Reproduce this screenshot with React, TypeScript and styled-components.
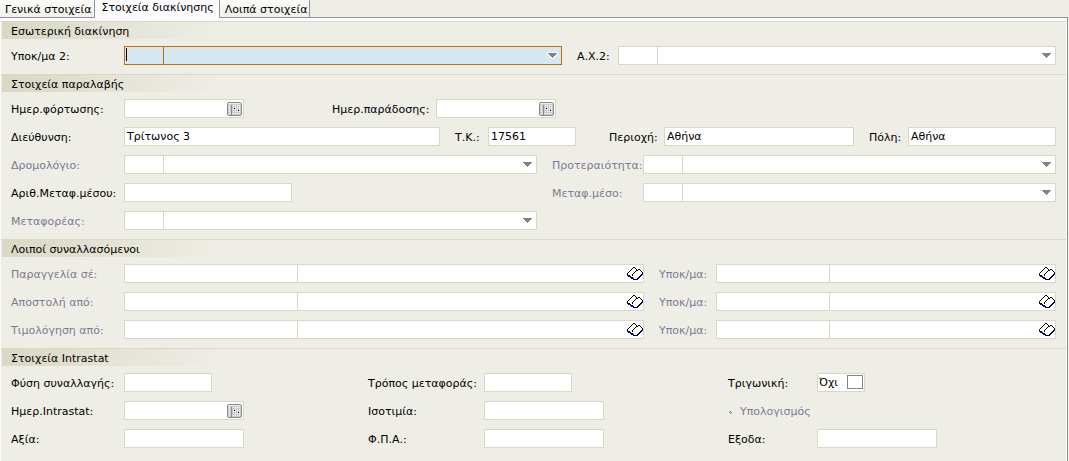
import React, { useId, useState } from "react";
import styled, { createGlobalStyle, css } from "styled-components";

const color = {
  page: "#efeee6",
  line: "#d8d8c4",
  frame: "#8f9398",
  muted: "#7c7995",
  focus: "#c8690c",
  focusFill: "#d7e8f0",
};

const GlobalStyle = createGlobalStyle`
  * { box-sizing: border-box; }
  body { margin: 0; background: ${color.page}; }
  body, input, select, button {
    font-family: Verdana, "DejaVu Sans", sans-serif;
    font-size: 11px;
    line-height: 13px;
    color: #000;
  }
`;

const Page = styled.main`
  display: flex;
  flex-direction: column;
  min-height: 100vh;
  padding-right: 1px;
`;

const TabBar = styled.div`
  display: flex;
  height: 17px;
`;

const Tab = styled.button<{ $active?: boolean }>`
  flex: none;
  height: 17px;
  margin: 0;
  padding: 3px 2px 1px 5px;
  border: 0;
  border-right: 1px solid ${color.frame};
  background: linear-gradient(#fbfbf8, #f1f0e9);
  white-space: nowrap;
  ${(p) =>
    p.$active &&
    css`
      height: 18px;
      padding: 0 5px 4px 7px;
      background: #fcfcfe;
      z-index: 1;
    `}
`;

const Panel = styled.div`
  flex: 1;
  padding-top: 3px;
  border: solid ${color.frame};
  border-width: 1px 1px 0 0;
  background: ${color.page};
  box-shadow: inset 0 3px 0 #fcfcfe, inset -1px 0 0 #fcfcfe, inset 1px 0 0 #f8f8f5;
`;

const SectionBox = styled.section`
  margin: 0 1px;
  border-top: 1px solid ${color.line};
`;

const SectionTitle = styled.h2`
  margin: 0 0 0 1px;
  padding: 3px 9px 1px;
  font-size: 11px;
  font-weight: normal;
  line-height: 13px;
  background: linear-gradient(to right, #d9d8c4, ${color.page} 220px);
`;

const SectionBody = styled.div`
  display: flex;
  flex-direction: column;
  gap: 9px;
  padding: 7px 10px 9px;
`;

const Row = styled.div<{ $columns: string }>`
  display: grid;
  grid-template-columns: ${(p) => p.$columns};
  height: 19px;
`;

const Label = styled.label<{ $muted?: boolean; $indent?: number }>`
  padding-top: 4px;
  padding-left: ${(p) => p.$indent ?? 0}px;
  white-space: nowrap;
  color: ${(p) => (p.$muted ? color.muted : "#000")};
`;

const Frame = styled.div<{ $width?: number; $focused?: boolean }>`
  position: relative;
  display: flex;
  height: 19px;
  width: ${(p) => (p.$width ? `${p.$width}px` : "auto")};
  border: 1px solid ${(p) => (p.$focused ? color.focus : color.line)};
  background: ${(p) => (p.$focused ? color.focusFill : "#fff")};
`;

const Entry = styled.input`
  flex: 1;
  min-width: 0;
  width: 100%;
  height: 17px;
  padding: 0 2px 1px;
  border: 0;
  outline: 0;
  background: transparent;
`;

const Code = styled(Entry)<{ $basis: string; $focused?: boolean }>`
  flex: 0 0 ${(p) => p.$basis};
  border-right: 1px solid ${(p) => (p.$focused ? color.focus : color.line)};
  ${(p) =>
    p.$focused &&
    css`
      background: linear-gradient(#000, #000) 1px 1px / 1px 13px no-repeat;
    `}
`;

const Choice = styled.select`
  flex: 1;
  min-width: 0;
  padding: 0 16px 1px 2px;
  border: 0;
  outline: 0;
  appearance: none;
  background: transparent;
`;

const Arrow = styled.svg`
  position: absolute;
  right: 3px;
  top: 5px;
  pointer-events: none;
`;

const IconButton = styled.button<{ $inset?: boolean }>`
  display: flex;
  align-items: flex-start;
  justify-content: flex-end;
  flex: none;
  width: 17px;
  padding: 2px ${(p) => (p.$inset ? 1 : 0)}px 0 0;
  border: 0;
  background: transparent;
`;

const ToggleFrame = styled(Frame)`
  align-items: flex-start;
  justify-content: space-between;
  padding: 1px 1px 0;
`;

const ToggleText = styled.span`
  padding-top: 1px;
`;

const Tick = styled.input`
  appearance: none;
  width: 16px;
  height: 14px;
  margin: 0;
  border: 1px solid #848484;
  background: #fff;
  &:checked {
    background: #848484;
  }
`;

const LinkButton = styled.button`
  display: flex;
  align-items: flex-start;
  gap: 7px;
  padding: 4px 0 0 1px;
  border: 0;
  background: transparent;
  color: ${color.muted};
`;

const Bullet = styled.svg`
  margin-top: 6px;
`;

type LabelProps = { label: string; muted?: boolean; indent?: number };

function TextField({ label, muted, indent, width, value = "" }: LabelProps & { width?: number; value?: string }) {
  const id = useId();
  return (
    <>
      <Label htmlFor={id} $muted={muted} $indent={indent}>{label}</Label>
      <Frame $width={width}><Entry id={id} defaultValue={value} /></Frame>
    </>
  );
}

function CalendarIcon() {
  const cells = [2, 4, 6, 8, 10, 12].flatMap((x) => [3, 5, 7, 9, 11].map((y) => [x, y]));
  return (
    <svg width="15" height="14" shapeRendering="crispEdges" aria-hidden="true">
      <path d="M1 0h13v1H1zM0 1h1v12H0zM14 1h1v12h-1zM1 13h13v1H1z" fill="#8a8a8a" />
      <path d="M1 1h13v12H1z" fill="#cccccc" />
      <path d="M1 1h13v1H1z" fill="#ececec" />
      {cells.map(([x, y]) => <rect key={`${x}-${y}`} x={x} y={y} width="1" height="1" fill="#fff" />)}
      <path d="M4 3h1v10H4z" fill="#8a8a8a" />
      <path d="M7 6h1v1H7zM11 8h1v1h-1z" fill="#000" />
    </svg>
  );
}

function BookIcon() {
  return (
    <svg width="16" height="14" viewBox="0 0 16 14" shapeRendering="crispEdges" aria-hidden="true">
      <path
        d="M0 8h1v1H0zM1 9h2v1H1zM3 10h1v1H3zM4 11h2v1H4zM6 12h1v1H6zM10 12h1v1h-1zM11 11h1v1h-1zM12 10h1v1h-1zM13 9h1v1h-1zM14 8h1v1h-1zM15 7h1v1h-1z"
        fill="#0000e8"
      />
      <path
        d="M6 0h2v1H6zM5 1h1v1H5zM8 1h1v1H8zM4 2h1v1H4zM9 2h1v1H9zM11 2h2v1h-2zM3 3h1v1H3zM9 3h2v1H9zM13 3h1v1h-1zM2 4h1v1H2zM8 4h1v1H8zM14 4h1v1h-1zM1 5h1v1H1zM7 5h1v1H7zM15 5h1v2h-1zM0 6h1v2H0zM6 6h1v1H6zM5 7h1v2H5zM14 7h1v1h-1zM1 8h2v1H1zM13 8h1v1h-1zM3 9h1v1H3zM12 9h1v1h-1zM4 10h2v1H4zM11 10h1v1h-1zM6 11h1v1H6zM10 11h1v1h-1zM7 12h3v1H7z"
        fill="#000"
      />
    </svg>
  );
}

function DateField({ label, indent }: LabelProps) {
  const id = useId();
  return (
    <>
      <Label htmlFor={id} $indent={indent}>{label}</Label>
      <Frame $width={120}>
        <Entry id={id} />
        <IconButton type="button" aria-label={label} $inset><CalendarIcon /></IconButton>
      </Frame>
    </>
  );
}

function ComboField({ label, muted, indent, focused }: LabelProps & { focused?: boolean }) {
  const id = useId();
  return (
    <>
      <Label htmlFor={id} $muted={muted} $indent={indent}>{label}</Label>
      <Frame $focused={focused}>
        <Code id={id} $basis="39px" $focused={focused} />
        <Choice aria-label={label} defaultValue=""><option value="" /></Choice>
        <Arrow width="11" height="7" shapeRendering="crispEdges" aria-hidden="true">
          {focused && <path d="M0 0h11v3H10v1H9v1H8v1H7v1H4V6H3V5H2V4H1V3H0z" fill="#fff" />}
          <path d="M1 1h9v1H9v1H8v1H7v1H6v1H5V5H4V4H3V3H2V2H1z" fill="#848484" />
        </Arrow>
      </Frame>
    </>
  );
}

function LookupField({ label, indent }: LabelProps) {
  const id = useId();
  return (
    <>
      <Label htmlFor={id} $muted $indent={indent}>{label}</Label>
      <Frame>
        <Code id={id} $basis="calc(100% / 3)" />
        <Entry aria-label={label} />
        <IconButton type="button" aria-label={label}><BookIcon /></IconButton>
      </Frame>
    </>
  );
}

function Section({ title, children }: { title: string; children: React.ReactNode }) {
  return (
    <SectionBox>
      <SectionTitle>{title}</SectionTitle>
      <SectionBody>{children}</SectionBody>
    </SectionBox>
  );
}

const tabs = ["Γενικά στοιχεία", "Στοιχεία διακίνησης", "Λοιπά στοιχεία"];
const pairColumns = "113px 1fr 106px 1fr";
const partyColumns = "113px 520fr 72px 340fr";
const intrastatColumns = "113px 244fr 116px 244fr 89px 239fr";

export default function App() {
  const [active, setActive] = useState(1);
  const [triangular, setTriangular] = useState(false);
  return (
    <Page>
      <GlobalStyle />
      <TabBar role="tablist">
        {tabs.map((name, i) => (
          <Tab key={name} type="button" role="tab" aria-selected={i === active} $active={i === active} onClick={() => setActive(i)}>
            {name}
          </Tab>
        ))}
      </TabBar>
      <Panel role="tabpanel">
        <Section title="Εσωτερική διακίνηση">
          <Row $columns="113px 1fr 56px 1fr">
            <ComboField label="Υποκ/μα 2:" focused />
            <ComboField label="Α.Χ.2:" indent={15} />
          </Row>
        </Section>
        <Section title="Στοιχεία παραλαβής">
          <Row $columns="113px 208fr 104px 620fr">
            <DateField label="Ημερ.φόρτωσης:" />
            <DateField label="Ημερ.παράδοσης:" />
          </Row>
          <Row $columns="113px 316fr 48px 88px 88px 190fr 54px 148fr">
            <TextField label="Διεύθυνση:" value="Τρίτωνος 3" />
            <TextField label="Τ.Κ.:" value="17561" indent={15} />
            <TextField label="Περιοχή:" value="Αθήνα" indent={33} />
            <TextField label="Πόλη:" value="Αθήνα" indent={15} />
          </Row>
          <Row $columns={pairColumns}>
            <ComboField label="Δρομολόγιο:" muted />
            <ComboField label="Προτεραιότητα:" muted indent={15} />
          </Row>
          <Row $columns={pairColumns}>
            <TextField label="Αριθ.Μεταφ.μέσου:" width={168} />
            <ComboField label="Μεταφ.μέσο:" muted indent={15} />
          </Row>
          <Row $columns={pairColumns}>
            <ComboField label="Μεταφορέας:" muted />
          </Row>
        </Section>
        <Section title="Λοιποί συναλλασόμενοι">
          {["Παραγγελία σέ:", "Αποστολή από:", "Τιμολόγηση από:"].map((label) => (
            <Row key={label} $columns={partyColumns}>
              <LookupField label={label} />
              <LookupField label="Υποκ/μα:" indent={15} />
            </Row>
          ))}
        </Section>
        <Section title="Στοιχεία Intrastat">
          <Row $columns={intrastatColumns}>
            <TextField label="Φύση συναλλαγής:" width={88} />
            <TextField label="Τρόπος μεταφοράς:" width={88} />
            <Label htmlFor="triangular">Τριγωνική:</Label>
            <ToggleFrame $width={48}>
              <ToggleText>{triangular ? "Ναι" : "Όχι"}</ToggleText>
              <Tick id="triangular" type="checkbox" checked={triangular} onChange={(e) => setTriangular(e.target.checked)} />
            </ToggleFrame>
          </Row>
          <Row $columns={intrastatColumns}>
            <DateField label="Ημερ.Intrastat:" />
            <TextField label="Ισοτιμία:" width={120} />
            <LinkButton type="button">
              <Bullet width="4" height="3" shapeRendering="crispEdges" aria-hidden="true">
                <path d="M1 0h1v1H1zM0 1h1v1H0zM2 1h1v1H2zM1 2h1v1H1z" fill={color.muted} />
              </Bullet>
              Υπολογισμός
            </LinkButton>
          </Row>
          <Row $columns={intrastatColumns}>
            <TextField label="Αξία:" width={120} />
            <TextField label="Φ.Π.Α.:" width={120} />
            <TextField label="Εξοδα:" width={120} />
          </Row>
        </Section>
      </Panel>
    </Page>
  );
}
